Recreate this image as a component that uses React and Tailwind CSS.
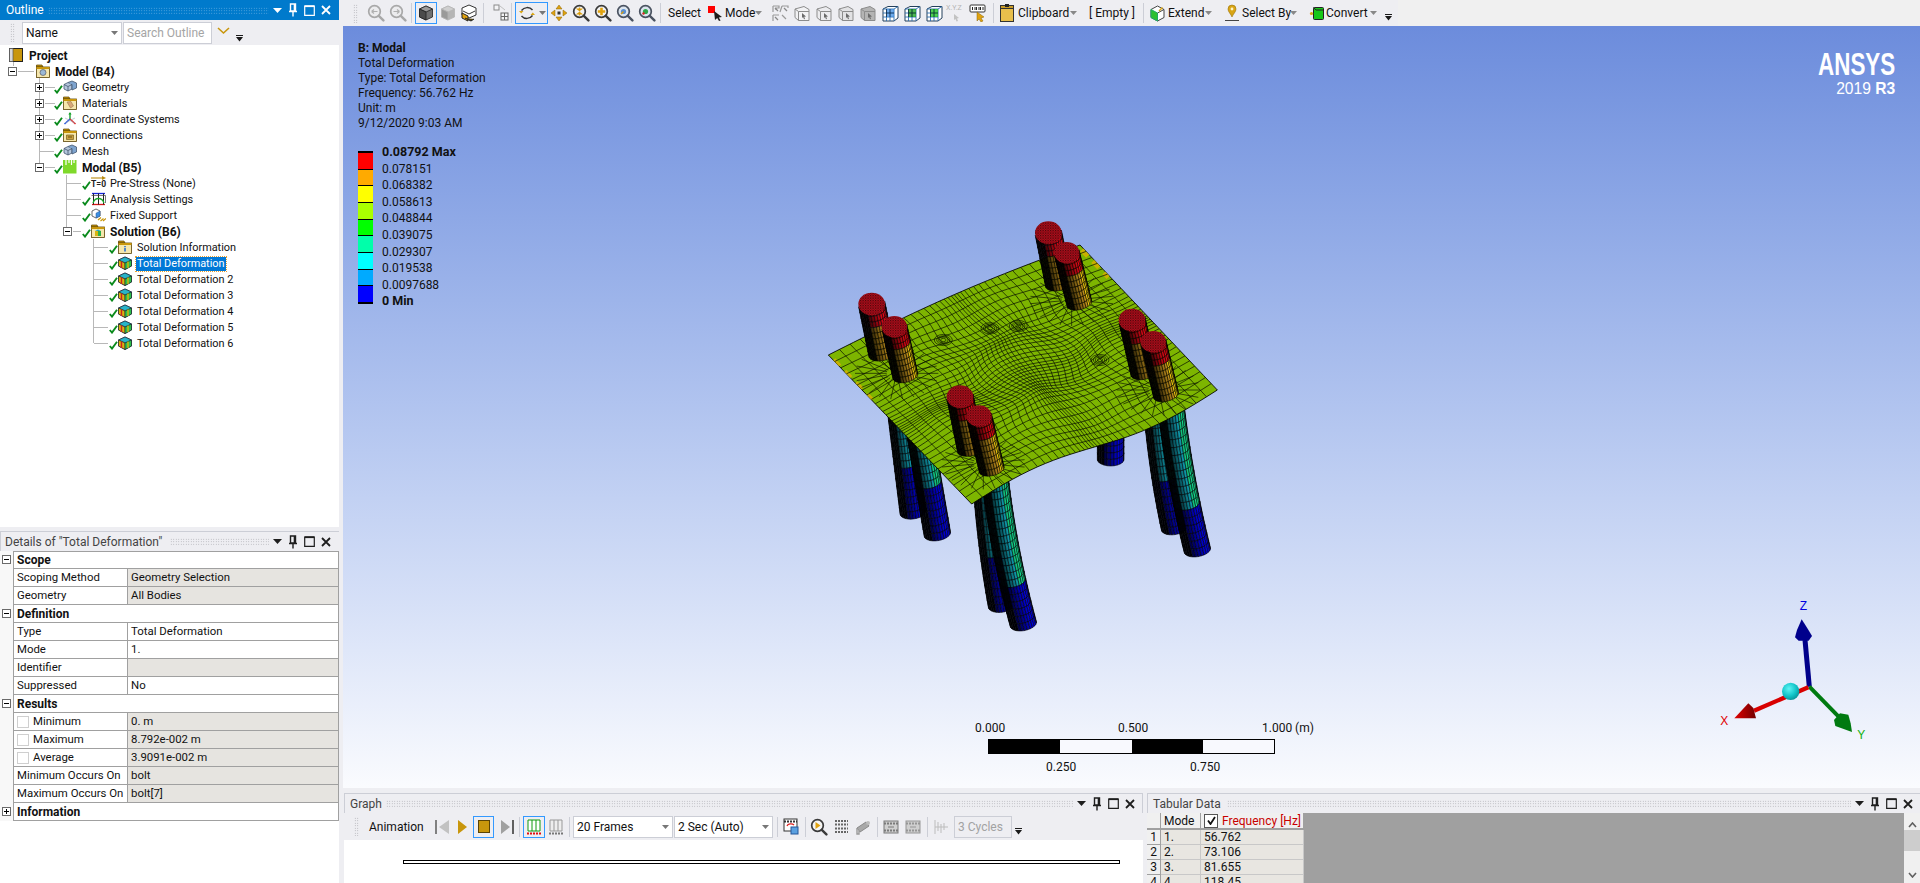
import React from "react";

/* ---------- small generic drawing helpers ---------- */
const S = ({ w = 16, h = 16, vb, children, className = "" }) => (
  <svg width={w} height={h} viewBox={vb || `0 0 ${w} ${h}`} className={"block shrink-0 " + className}>{children}</svg>
);

const Caret = ({ c = "#808080", w = 7 }) => (
  <S w={w} h={4} vb="0 0 7 4"><path d="M0 0H7L3.5 4Z" fill={c} /></S>
);

const Overflow = () => (
  <S w={7} h={8} vb="0 0 7 8"><path d="M0 1H7V2H0Z M0 3H7L3.5 7.5Z" fill="#1a1a1a" /></S>
);

const Sep = ({ className = "" }) => <div className={"w-px h-[20px] bg-[#ccced6] shrink-0 " + className} />;

const Grip = ({ className = "" }) => (
  <div className={"w-[5px] h-[19px] shrink-0 bg-[radial-gradient(#a3a3a8_0.7px,transparent_0.8px)] bg-[length:2.5px_2.5px] " + className} />
);

const PanelButtons = ({ c = "#1e1e1e", className = "" }) => (
  <div className={"flex items-center shrink-0 " + className}>
    <S w={9} h={5} vb="0 0 9 5"><path d="M0 0H9L4.5 5Z" fill={c} /></S>
    <S w={10} h={14} vb="0 0 10 14" className="ml-[6px]">
      <path d="M2.5 1H7.5V8H2.5Z M1 8.5H9 M5 9V13.5 M6.4 1.5V8" fill="none" stroke={c} strokeWidth="1.4" />
    </S>
    <S w={11} h={11} vb="0 0 11 11" className="ml-[6px]">
      <path d="M.7 1.2H10.3V10.3H.7Z" fill="none" stroke={c} strokeWidth="1.2" />
      <path d="M.7 1.2H10.3" stroke={c} strokeWidth="1.8" />
    </S>
    <S w={10} h={10} vb="0 0 10 10" className="ml-[6px]">
      <path d="M1 1L9 9M9 1L1 9" stroke={c} strokeWidth="1.8" />
    </S>
  </div>
);

/* ---------- toolbar icons ---------- */
const Mag = ({ ring = "#3a3a3a", fill = "#e8e8ea", children }) => (
  <S w={18} h={18}>
    <circle cx="7.5" cy="7.5" r="5.8" fill={fill} stroke={ring} strokeWidth="1.7" />
    <path d="M11.8 11.8L16.4 16.4" stroke={ring} strokeWidth="2.4" strokeLinecap="round" />
    {children}
  </S>
);

const Cube = ({ a = "#5a5a5a", b = "#8b8b8b", c = "#b5b5b5", o = "#222", s = 16 }) => (
  <S w={s} h={s} vb="0 0 16 16">
    <path d="M8 1L14.5 4V12L8 15L1.5 12V4Z" fill={b} stroke={o} strokeWidth=".8" />
    <path d="M8 1L14.5 4L8 7L1.5 4Z" fill={c} stroke={o} strokeWidth=".8" />
    <path d="M8 7V15L1.5 12V4Z" fill={a} stroke={o} strokeWidth=".8" />
  </S>
);

const WireBox = ({ fill = "#f2f2f4" }) => (
  <S w={16} h={17}>
    <path d="M1 4L10 1.5L15 4.5V15.5H4.5L1 12.5Z" fill={fill} stroke="#8c8c8c" />
    <path d="M1 4L4.5 6.5V15.5 M4.5 6.5H15" fill="none" stroke="#8c8c8c" />
    <path d="M8 8L12 11.5L10.2 11.7L11 14L10 14.3L9.1 12L8 13Z" fill="#6a6a6a" />
  </S>
);

const GridBox = ({ accent = "#2f6fd6" }) => (
  <S w={17} h={17}>
    <path d="M1 4L6 1.5H16V13L12 16H1Z" fill="#fff" stroke="#24405c" />
    <path d="M1 4H12V16 M12 4L16 1.5 M4.5 4V16 M8 4V16 M1 8H12 M1 12H12" fill="none" stroke="#2c6fb0" strokeWidth=".9" />
    <path d="M4.5 4H12V12H4.5Z" fill={accent} opacity=".75" />
    <path d="M4.5 4V12 M8 4V12 M4.5 8H12" stroke="#123" strokeWidth=".7" />
  </S>
);

const Ib = ({ w = "w-[22px]", children }) => (
  <div className={`${w} h-[22px] flex items-center justify-center shrink-0`}>{children}</div>
);

const Boxed = ({ className = "", children }) => (
  <div className={"h-[22px] flex items-center justify-center shrink-0 border border-[#3399ff] " + className}>{children}</div>
);

const ModeCursor = () => (
  <S w={15} h={15}>
    <rect x="0" y="0" width="7" height="7" fill="#ff0000" />
    <path d="M6 5L14 11L10.8 11.4L12.6 14.5L11 15L9.2 12L7 14Z" fill="#1d1d1d" />
  </S>
);

const Rotate = () => (
  <S w={18} h={18}>
    <path d="M3.5 6.5A7 7 0 0 1 14.5 6" fill="none" stroke="#333" strokeWidth="1.4" />
    <path d="M14.5 11.5A7 7 0 0 1 3.5 12" fill="none" stroke="#333" strokeWidth="1.4" />
    <path d="M1 7H5.5L3.2 9.6Z" fill="#d9a514" />
    <path d="M17 11H12.5L14.8 8.4Z" fill="#d9a514" />
  </S>
);

const Pan = () => (
  <S w={18} h={18}>
    <path d="M9 1L12 5H6Z M9 17L6 13H12Z M1 9L5 6V12Z M17 9L13 12V6Z" fill="#e0a20f" stroke="#8a6406" strokeWidth=".5" />
    <rect x="7.5" y="7.5" width="3" height="3" fill="#333" />
  </S>
);

const Clip = () => (
  <S w={14} h={18}>
    <rect x=".5" y="1.5" width="13" height="16" fill="#e8bf4c" stroke="#333" />
    <rect x=".5" y="1.5" width="13" height="3" fill="#c99c26" stroke="#333" />
    <rect x="5" y="0" width="4" height="3" fill="#222" />
  </S>
);

const ExtendIcon = () => (
  <S w={15} h={17}>
    <path d="M7.5 1L14 4.5V12.5L7.5 16L1 12.5V4.5Z" fill="#fff" stroke="#444" />
    <path d="M7.5 8V16L1 12.5V4.5Z" fill="#2fc02f" stroke="#2a6" />
    <path d="M7.5 8L14 4.5" stroke="#444" />
    <path d="M9 6L12.5 2.5" stroke="#d9a514" strokeWidth="1.5" />
  </S>
);

const PinIcon = () => (
  <S w={16} h={18}>
    <path d="M8 1A4 4 0 0 1 12 5C12 8 9 10 8 13C7 10 4 8 4 5A4 4 0 0 1 8 1Z" fill="#d9a514" stroke="#9a7208" strokeWidth=".6" />
    <circle cx="8" cy="5" r="1.4" fill="#fff3c4" />
    <path d="M1 16.5H15" stroke="#444" />
  </S>
);

const ConvertIcon = () => (
  <S w={16} h={15}>
    <rect x="4.5" y="1.5" width="10" height="12" rx="1" fill="#18c818" stroke="#222" />
    <path d="M4.5 1.5L7 4H14.5" fill="none" stroke="#222" />
    <circle cx="2.5" cy="7.5" r="1.6" fill="#d9a514" />
  </S>
);

const Tx = ({ className = "", children }) => (
  <div className={"text-[12px] leading-none whitespace-nowrap shrink-0 text-[#111] " + className}>{children}</div>
);

const TopToolbar = () => (
  <div className="flex items-center h-[26px] bg-[#eeeef2]">
    <Grip className="ml-[10px]" />
    <Ib w="ml-[7px] w-[22px]"><Mag ring="#a8a8a8" fill="#ececee"><path d="M4.5 7.5H10.5M4.5 7.5L7 5.5M4.5 7.5L7 9.5" stroke="#b0b0b0" strokeWidth="1.2" fill="none" /></Mag></Ib>
    <Ib><Mag ring="#a8a8a8" fill="#ececee"><path d="M4.5 7.5H10.5M10.5 7.5L8 5.5M10.5 7.5L8 9.5" stroke="#b0b0b0" strokeWidth="1.2" fill="none" /></Mag></Ib>
    <Sep className="ml-[2px]" />
    <Boxed className="ml-[3px] w-[22px]"><Cube a="#4b4b4b" b="#6f6f6f" c="#9a9a9a" /></Boxed>
    <Ib><Cube a="#9a9a9a" b="#b5b5b5" c="#cfcfcf" o="#b5b5b5" /></Ib>
    <Ib>
      <S w={18} h={18}>
        <path d="M8 1L15 4V11L8 14L1 11V4Z" fill="#fff" stroke="#333" />
        <path d="M1 9L7 12V17L1 14Z" fill="#e0a20f" stroke="#222" />
        <path d="M2 7L8 10L14 7" fill="none" stroke="#333" />
        <path d="M4 14L10 17L13 15" stroke="#222" fill="#5a4a10" />
      </S>
    </Ib>
    <Sep className="ml-[2px]" />
    <Ib w="ml-[7px] w-[20px]">
      <S w={16} h={18}>
        <rect x="1" y="1" width="5" height="5" fill="#f4f4f6" stroke="#8a8a8a" />
        <path d="M7 2L12 6" stroke="#c0c0c0" />
        <rect x="8" y="9" width="7" height="7" fill="#f4f4f6" stroke="#666" />
        <path d="M11.5 9V16M8 12.5H15" stroke="#666" />
      </S>
    </Ib>
    <Sep />
    <Boxed className="ml-[3px] w-[33px] gap-[3px]"><Rotate /><Caret c="#777" /></Boxed>
    <Ib><Pan /></Ib>
    <Ib><Mag fill="#f2f2f2"><path d="M7.5 3.5V6.6L5.5 5H9.5L7.5 6.6 M7.5 11.5V8.4L5.5 10H9.5L7.5 8.4" stroke="#d99c0c" strokeWidth="1.2" fill="#d99c0c" /></Mag></Ib>
    <Ib><Mag fill="#f2f2f2"><path d="M3.8 7.5H11.2M7.5 3.8V11.2" stroke="#e0a20f" strokeWidth="2.6" /></Mag></Ib>
    <Ib><Mag ring="#4a5260" fill="#dbe4ee"><circle cx="7.5" cy="7.5" r="2.6" fill="#5a8fd0" /><path d="M5 10L7.5 7.5" stroke="#d99c0c" strokeWidth="1.2" /></Mag></Ib>
    <Ib><Mag ring="#4a5260" fill="#dbe4ee"><circle cx="7.5" cy="7.5" r="2.6" fill="#2fa84a" /><circle cx="5.5" cy="9.5" r="1.2" fill="#d22" /></Mag></Ib>
    <Sep className="ml-[2px]" />
    <Tx className="ml-[7px] w-[32px]">Select</Tx>
    <div className="ml-[8px] shrink-0"><ModeCursor /></div>
    <Tx className="ml-[2px] w-[29px]">Mode</Tx>
    <div className="ml-[1px] shrink-0"><Caret c="#888" /></div>
    <Ib w="ml-[7px] w-[22px]">
      <S w={18} h={18}>
        <path d="M2 2H8V4H5V6 M2 2V8 M11 2H17V4 M11 2L9 8 M2 11H8 M2 11V17 M11 11L15 15" fill="none" stroke="#9a9a9a" strokeWidth="1.2" />
        <path d="M4 4L7 7M13 4L16 7M4 13L7 16" stroke="#888" strokeWidth="1.3" />
      </S>
    </Ib>
    <Ib><WireBox /></Ib>
    <Ib><WireBox fill="#ececef" /></Ib>
    <Ib><WireBox fill="#e2e2e4" /></Ib>
    <Ib><WireBox fill="#b4b4b4" /></Ib>
    <Ib><GridBox accent="#3f8fe6" /></Ib>
    <Ib><GridBox accent="#16a016" /></Ib>
    <Ib><GridBox accent="#16c016" /></Ib>
    <Ib>
      <div className="relative w-[20px] h-[18px]">
        <div className="absolute top-0 left-0 text-[7px] leading-[8px] text-[#b5b5b5] whitespace-nowrap">X.Y.Z</div>
        <S w={20} h={18} className="absolute top-0 left-0"><path d="M8 10L13 14L11 14.4L12 17L10.5 17.4L9.5 15L8 16Z" fill="#c2c2c2" /></S>
      </div>
    </Ib>
    <Ib>
      <S w={18} h={18}>
        <rect x="1" y="1" width="15" height="7" rx="1" fill="#fff" stroke="#333" />
        <path d="M3.5 3V6 M6 3V6M7.5 3V6M10 3V6M11.5 3V6M14 3V6" stroke="#222" />
        <path d="M8 8L8 17L10 15L12 18L14 17L12 14L15 13Z" fill="#e0a20f" stroke="#8a6406" strokeWidth=".5" />
      </S>
    </Ib>
    <Sep className="ml-[4px]" />
    <div className="ml-[6px] shrink-0"><Clip /></div>
    <Tx className="ml-[4px] w-[51px]">Clipboard</Tx>
    <div className="ml-[1px] shrink-0"><Caret c="#888" /></div>
    <Tx className="ml-[12px] w-[48px]">[ Empty ]</Tx>
    <Sep className="ml-[6px]" />
    <div className="ml-[6px] shrink-0"><ExtendIcon /></div>
    <Tx className="ml-[3px] w-[36px]">Extend</Tx>
    <div className="ml-[1px] shrink-0"><Caret c="#888" /></div>
    <div className="ml-[12px] shrink-0"><PinIcon /></div>
    <Tx className="ml-[2px] w-[47px]">Select By</Tx>
    <div className="ml-[1px] shrink-0"><Caret c="#888" /></div>
    <div className="ml-[12px] shrink-0"><ConvertIcon /></div>
    <Tx className="ml-[1px] w-[42px]">Convert</Tx>
    <div className="ml-[2px] shrink-0"><Caret c="#888" /></div>
    <div className="ml-[8px] mt-[7px] shrink-0"><Overflow /></div>
    <div className="ml-[6px] flex-1 h-[26px] bg-[#f0f0f0]" />
  </div>
);

/* ---------- tree icons ---------- */
const Check = () => (
  <S w={9} h={9} className="mt-[6px]"><path d="M.8 5L3 7.6L8 .8" fill="none" stroke="#0a8a1c" strokeWidth="1.9" /></S>
);

const Folder = ({ children }) => (
  <S w={14} h={14}>
    <path d="M.5 3V1H6L7 3Z" fill="#c8960c" stroke="#5a4305" strokeWidth=".7" />
    <rect x=".5" y="3" width="13" height="10.5" fill="#f6e7ad" stroke="#5a4305" strokeWidth=".8" />
    <path d="M.5 3H13.5V5H.5Z" fill="#c8960c" />
    {children}
  </S>
);

const GeoCube = () => (
  <S w={14} h={14}>
    <path d="M1 4.5L5 2.5L9 4.5V9L5 11L1 9Z" fill="#b4c6dc" stroke="#42566e" strokeWidth=".8" />
    <path d="M5 2.5L9 1L13.5 3V8L9 10V4.5" fill="#7ea4cf" stroke="#42566e" strokeWidth=".8" />
    <path d="M1 4.5L5 6.5L9 4.5M5 6.5V11" fill="none" stroke="#42566e" strokeWidth=".8" />
  </S>
);

const Triad = () => (
  <S w={14} h={14}>
    <path d="M7 7V1" stroke="#16a02a" strokeWidth="1.4" />
    <path d="M5.4 2.6L7 0L8.6 2.6Z" fill="#16a02a" />
    <path d="M7 7L1.5 12" stroke="#1f4fe0" strokeWidth="1.4" />
    <path d="M7 7L12.5 12" stroke="#e02020" strokeWidth="1.4" />
    <path d="M2 6L12 11M12 6L2 11" stroke="#9ab" strokeWidth=".6" />
  </S>
);

const ModalIcon = () => (
  <S w={14} h={14}>
    <rect width="13.5" height="13.5" fill="#7fd92a" />
    <path d="M3 0V5M6 0V3M8.5 0V5M11 0V3" stroke="#fff" strokeWidth="1.2" />
  </S>
);

const PreStress = () => (
  <div className="relative w-[16px] h-[14px] shrink-0 -mr-[2px]">
    <S w={15} h={5} className="absolute top-0 left-0"><path d="M0 2H12" stroke="#b88a10" strokeWidth="1.1" /><path d="M11 0L15 2L11 4Z" fill="#b88a10" /></S>
    <div className="absolute left-0 top-[4px] text-[8.5px] leading-[9px] font-bold text-[#222]">T=0</div>
  </div>
);

const Analysis = () => (
  <S w={15} h={14}>
    <path d="M1 1.5H14" stroke="#1526e0" strokeWidth="1.3" />
    <path d="M1 12.5H14" stroke="#d81818" strokeWidth="1.3" />
    <path d="M2.5 1.5V12.5M7.5 1.5V12.5M12.5 1.5V12.5" stroke="#222" />
    <path d="M.5 3.5H14.5V11" fill="none" stroke="#444" strokeWidth=".7" />
    <path d="M2 11C4 5 11 5 13 11" fill="none" stroke="#1aa82a" strokeWidth="1.3" />
  </S>
);

const Fixed = () => (
  <S w={15} h={14}>
    <path d="M1 3L5 1L9 3V8L5 10L1 8Z" fill="#fff" stroke="#444" strokeWidth=".8" />
    <path d="M5 5.2L9 3V8L5 10Z" fill="#3d8fe0" stroke="#25579a" strokeWidth=".5" />
    <path d="M7 12L10 9.5M9.5 13L12.5 10.5M12 13L15 10.5" stroke="#c8960c" strokeWidth="1.2" />
  </S>
);

const Result = () => (
  <S w={14} h={14}>
    <path d="M7 1L13.5 4V10L7 13.5L.5 10V4Z" fill="#1a7a80" stroke="#223" strokeWidth=".8" />
    <path d="M7 1L13.5 4L7 7L.5 4Z" fill="#28b4c8" stroke="#223" strokeWidth=".6" />
    <path d="M7 7V13.5L.5 10V4Z" fill="#d8b410" stroke="#223" strokeWidth=".6" />
    <path d="M3.5 5.5V12" stroke="#c22" strokeWidth="1.4" />
    <path d="M7 7V13.5L13.5 10V4Z" fill="#2cc04a" stroke="#223" strokeWidth=".6" />
    <path d="M10 5.5V12" stroke="#d8b410" strokeWidth="1.4" />
  </S>
);

const Pm = ({ open, size = "w-[9px] h-[9px]" }) => (
  <div className={`${size} relative border border-[#6a6a6a] bg-white shrink-0`}>
    <div className="absolute left-[1px] right-[1px] top-[3px] h-px bg-black" />
    {!open && <div className="absolute top-[1px] bottom-[1px] left-[3px] w-px bg-black" />}
  </div>
);

const levels = { 1: "pl-[8px]", 2: "pl-[35px]", 3: "pl-[63px]", 4: "pl-[90px]" };

const Row = ({ level, pm, check = true, icon, bold, selected, children }) => (
  <div className={`flex items-center h-[16px] ${levels[level]}`}>
    <div className="w-[9px] shrink-0">{pm && <Pm open={pm === "open"} />}</div>
    <div className="w-[9px] h-[16px] ml-[10px] shrink-0">{check && <Check />}</div>
    <div className="w-[14px] shrink-0 flex">{icon}</div>
    <div className={`leading-[14px] whitespace-nowrap mt-[1px] ${bold ? "font-bold text-[12px]" : "text-[10.9px]"} ${selected ? "ml-[4px] px-[1px] bg-[#0078d7] text-white outline-1 outline-dotted outline-[#e8a030]" : "ml-[5px] text-[#111]"}`}>{children}</div>
  </div>
);

const TreeLines = () => (
  <svg className="absolute left-0 top-0" width="339" height="340" viewBox="0 45 339 340">
    <path
      d="M13 62V66M18 71H34M39 78V167M45 87H54M45 103H54M45 119H54M45 135H54M40 151H54M45 167H54M66 175V231M67 183H81M67 199H81M67 215H81M73 231H81M93 239V343M94 247H108M94 263H108M94 279H108M94 295H108M94 311H108M94 327H108M94 343H108"
      fill="none" stroke="#707070" strokeDasharray="1 1" transform="translate(.5 .5)"
    />
  </svg>
);

const Outline = () => (
  <div className="h-[527px] flex flex-col shrink-0">
    <div className="h-[20px] bg-[#007acc] flex items-center shrink-0">
      <div className="ml-[6px] text-white text-[12px] leading-none">Outline</div>
      <div className="ml-[4px] flex-1 h-[7px] bg-[radial-gradient(#6db4e4_0.7px,transparent_0.8px)] bg-[length:2.5px_2.5px]" />
      <PanelButtons c="#ffffff" className="ml-[4px] mr-[8px]" />
    </div>
    <div className="h-[25px] bg-[#eeeef2] flex items-center shrink-0">
      <Grip className="ml-[10px]" />
      <div className="ml-[7px] w-[100px] h-[22px] bg-white border border-[#ccced6] flex items-center shrink-0">
        <span className="ml-[3px] text-[12px] text-[#111]">Name</span>
        <span className="ml-auto mr-[3px]"><Caret c="#777" /></span>
      </div>
      <div className="ml-[1px] w-[89px] h-[22px] bg-white border border-[#ccced6] flex items-center shrink-0">
        <span className="ml-[3px] text-[12px] text-[#a5a5a5] whitespace-nowrap">Search Outline</span>
      </div>
      <S w={13} h={8} className="ml-[5px] -mt-[4px]"><path d="M1 1L6.5 6L12 1" fill="none" stroke="#c8960c" strokeWidth="1.6" /></S>
      <div className="ml-[6px] mt-[10px]"><Overflow /></div>
    </div>
    <div className="relative flex-1 bg-white pt-[2px]">
      <TreeLines />
      <div className="relative">
        <div className="flex items-center h-[16px] pl-[9px]">
          <S w={14} h={14}>
            <rect x=".5" y=".5" width="13" height="13" fill="#c8960c" stroke="#222" />
            <rect x=".5" y=".5" width="3.5" height="13" fill="#d8d8d8" stroke="#555" strokeWidth=".7" />
          </S>
          <div className="ml-[6px] mt-[1px] text-[12px] leading-[14px] font-bold text-[#111]">Project</div>
        </div>
        <Row level={1} pm="open" check={false} bold icon={<Folder><circle cx="7" cy="8.5" r="3" fill="#9bb8d4" stroke="#445" strokeWidth=".6" /></Folder>}>Model (B4)</Row>
        <Row level={2} pm="closed" icon={<GeoCube />}>Geometry</Row>
        <Row level={2} pm="closed" icon={<Folder><path d="M4 6L8 5.5L10.5 10L7.5 12Z" fill="#d8a878" stroke="#8a6a40" strokeWidth=".5" /></Folder>}>Materials</Row>
        <Row level={2} pm="closed" icon={<Triad />}>Coordinate Systems</Row>
        <Row level={2} pm="closed" icon={<Folder><path d="M3.5 7H10.5V11.5H3.5Z" fill="#c8a040" stroke="#6a5010" strokeWidth=".6" /><path d="M5 9H9" stroke="#6a5010" /></Folder>}>Connections</Row>
        <Row level={2} icon={<GeoCube />}>Mesh</Row>
        <Row level={2} pm="open" bold icon={<ModalIcon />}>Modal (B5)</Row>
        <Row level={3} icon={<PreStress />}>Pre-Stress (None)</Row>
        <Row level={3} icon={<Analysis />}>Analysis Settings</Row>
        <Row level={3} icon={<Fixed />}>Fixed Support</Row>
        <Row level={3} pm="open" bold icon={<Folder><path d="M4 7H7V12H4Z" fill="#d8b410" /><path d="M7 7H10V12H7Z" fill="#2cb04a" /><path d="M4 7L7 5.5L10 7Z" fill="#28a4c8" /></Folder>}>Solution (B6)</Row>
        <Row level={4} icon={<Folder><path d="M6.2 6H7.8V7.2H6.2Z M6.2 8H7.8V11.5H6.2Z" fill="#2a6fd0" /></Folder>}>Solution Information</Row>
        <Row level={4} selected icon={<Result />}>Total Deformation</Row>
        <Row level={4} icon={<Result />}>Total Deformation 2</Row>
        <Row level={4} icon={<Result />}>Total Deformation 3</Row>
        <Row level={4} icon={<Result />}>Total Deformation 4</Row>
        <Row level={4} icon={<Result />}>Total Deformation 5</Row>
        <Row level={4} icon={<Result />}>Total Deformation 6</Row>
      </div>
    </div>
  </div>
);

/* ---------- details ---------- */
const Section = ({ children, open = true, first }) => (
  <div className="flex h-[18px]">
    <div className="w-[13px] shrink-0 bg-[#f8f8f8] pl-[2px] pt-[4px]"><Pm open={open} /></div>
    <div className={`flex-1 flex items-center border-l border-r border-b border-[#a0a0a0] bg-white pl-[3px] text-[12px] font-bold text-[#111] ${first ? "border-t" : ""}`}>{children}</div>
  </div>
);

const Prop = ({ k, v, white, box }) => (
  <div className="flex h-[18px]">
    <div className="w-[13px] shrink-0 bg-[#f8f8f8]" />
    <div className="flex flex-1 border-l border-r border-b border-[#a0a0a0] text-[11.4px] text-[#111]">
      <div className="w-[114px] shrink-0 flex items-center border-r border-[#a0a0a0] bg-white pl-[3px] whitespace-nowrap">
        {box && <div className="w-[12px] h-[12px] border border-[#cfcfcf] bg-white mr-[4px] shrink-0" />}
        {k}
      </div>
      <div className={`flex-1 flex items-center pl-[3px] ${white ? "bg-white" : "bg-[#e6e4e0]"}`}>{v}</div>
    </div>
  </div>
);

const Details = () => (
  <div className="flex-1 flex flex-col mt-[4px]">
    <div className="h-[20px] flex items-center border-t border-l border-[#ccced6] shrink-0">
      <div className="ml-[4px] text-[12px] leading-none text-[#444] whitespace-nowrap">Details of "Total Deformation"</div>
      <div className="ml-[8px] flex-1 h-[7px] bg-[radial-gradient(#a8a8ae_0.7px,transparent_0.8px)] bg-[length:2.5px_2.5px]" />
      <PanelButtons className="ml-[4px] mr-[8px]" />
    </div>
    <div className="flex-1 bg-white">
      <Section first>Scope</Section>
      <Prop k="Scoping Method" v="Geometry Selection" />
      <Prop k="Geometry" v="All Bodies" />
      <Section>Definition</Section>
      <Prop k="Type" v="Total Deformation" white />
      <Prop k="Mode" v="1." white />
      <Prop k="Identifier" v="" />
      <Prop k="Suppressed" v="No" white />
      <Section>Results</Section>
      <Prop k="Minimum" v="0. m" box />
      <Prop k="Maximum" v="8.792e-002 m" box />
      <Prop k="Average" v="3.9091e-002 m" box />
      <Prop k="Minimum Occurs On" v="bolt" />
      <Prop k="Maximum Occurs On" v="bolt[7]" />
      <Section open={false}>Information</Section>
    </div>
  </div>
);

/* ---------- FE model drawing ---------- */
const hex = (c) => [1, 3, 5].map((i) => parseInt(c.slice(i, i + 2), 16));
const shadeCol = (c, f) => {
  const [r, g, b] = hex(c);
  const t = (x) => Math.max(0, Math.min(255, Math.round(x * f)));
  return `rgb(${t(r)},${t(g)},${t(b)})`;
};

function cylinder(key, a, b, r, bend, colorFn, n = 14, m = 12) {
  const dx = b[0] - a[0], dy = b[1] - a[1];
  const len = Math.hypot(dx, dy);
  const ax = [dx / len, dy / len];
  const pp = [ax[1], -ax[0]];
  const pt = (t, th) => {
    const bow = bend * 4 * t * (1 - t);
    const s = Math.sin(th), c = Math.cos(th);
    return [
      a[0] + dx * t + pp[0] * (r * s + bow) + ax[0] * r * 0.5 * c,
      a[1] + dy * t + pp[1] * (r * s + bow) + ax[1] * r * 0.5 * c,
    ];
  };
  const out = [];
  for (let i = 0; i < m; i++) {
    const t0 = i / m, t1 = (i + 1) / m;
    for (let j = 0; j < n; j++) {
      const th0 = -Math.PI / 2 + (Math.PI * j) / n;
      const th1 = -Math.PI / 2 + (Math.PI * (j + 1)) / n;
      const s = Math.sin((th0 + th1) / 2);
      const lit = s < -0.5 ? 0.03 : s > 0.985 ? 0.05 : s > 0.9 ? 1.05 : 0.22 + 0.62 * (s + 0.5);
      const fill = shadeCol(colorFn((t0 + t1) / 2, s), lit);
      const pts = [pt(t0, th0), pt(t0, th1), pt(t1, th1), pt(t1, th0)]
        .map((p) => p[0].toFixed(1) + "," + p[1].toFixed(1)).join(" ");
      out.push(<polygon key={`${key}-${i}-${j}`} points={pts} fill={fill} stroke="#000" strokeWidth="1.7" />);
    }
  }
  return out;
}

const legCol = (cut) => (t, s) => {
  if (t > cut) return "#0000e8";
  return s > 0.35 ? "#14e090" : "#14c8e0";
};
const boltCol = (t, s) => {
  if (t < 0.38) return "#f00818";
  if (s > 0.6) return "#f8d010";
  return "#d8a020";
};

const L = [85, 465], T = [840, 135], Rr = [1252, 570], B = [515, 912];
const mix = (p, q, t) => [p[0] + (q[0] - p[0]) * t, p[1] + (q[1] - p[1]) * t];
const e0 = (u) => { const q = mix(L, T, u); return [q[0], q[1] - 16 * Math.sin(Math.PI * u)]; };
const e1 = (u) => { const q = mix(B, Rr, u); return [q[0], q[1] - 20 * Math.sin(2 * Math.PI * u)]; };
const plate = (u, v) => {
  const c0 = e0(u), c1 = e1(u);
  const d0 = mix(L, B, v), d1 = mix(T, Rr, v);
  const bl = mix(mix(L, T, u), mix(B, Rr, u), v);
  const env = Math.sin(Math.PI * u) * Math.sin(Math.PI * v);
  const dx = Math.sin(u * 13 + v * 5) * Math.sin(v * 15 - u * 4) * 26 * env;
  const dy = Math.cos(u * 11 - v * 7) * Math.sin(v * 12 + u * 6) * 22 * env;
  return [
    (1 - v) * c0[0] + v * c1[0] + (1 - u) * d0[0] + u * d1[0] - bl[0] + dx,
    (1 - v) * c0[1] + v * c1[1] + (1 - u) * d0[1] + u * d1[1] - bl[1] + dy,
  ];
};
const warp = (t) => {
  const s = 2 * t - 1;
  const a = Math.abs(s);
  return 0.5 + 0.5 * Math.sign(s) * (0.62 * Math.pow(a, 2.0) + 0.38 * a);
};
const N = 36;
const meshPaths = (() => {
  const lines = [];
  for (let i = 1; i < N; i++) {
    const g = warp(i / N);
    let d1 = "", d2 = "";
    for (let k = 0; k <= 30; k++) {
      const q = k / 30;
      const p1 = plate(g, q), p2 = plate(q, g);
      d1 += (k ? "L" : "M") + p1[0].toFixed(1) + " " + p1[1].toFixed(1);
      d2 += (k ? "L" : "M") + p2[0].toFixed(1) + " " + p2[1].toFixed(1);
    }
    lines.push(d1, d2);
  }
  return lines;
})();
const outlinePath = (() => {
  let d = "";
  const add = (f) => { for (let k = 0; k <= 30; k++) { const p = f(k / 30); d += (d ? "L" : "M") + p[0].toFixed(1) + " " + p[1].toFixed(1); } };
  add((q) => plate(q, 0));
  add((q) => plate(1, q));
  add((q) => plate(1 - q, 1));
  add((q) => plate(0, 1 - q));
  return d + "Z";
})();

const bolts = [
  [[215, 312], [246, 462], 40],
  [[283, 380], [316, 528], 38],
  [[745, 98], [776, 252], 40],
  [[800, 158], [838, 310], 38],
  [[996, 360], [1032, 518], 40],
  [[1060, 425], [1098, 585], 38],
  [[480, 590], [512, 748], 40],
  [[537, 648], [575, 808], 38],
];

const spiders = [[290, 520], [815, 300], [1075, 570], [550, 790]];
const knots = [[570, 385], [655, 378], [430, 420], [900, 480]];

const spiderPaths = (() => {
  const out = [];
  spiders.forEach(([x, y], si) => {
    for (let i = 0; i < 22; i++) {
      const a = (i / 22) * Math.PI * 2 + si;
      out.push(`M${x + Math.cos(a) * 30} ${y + Math.sin(a) * 18}L${x + Math.cos(a) * 125} ${y + Math.sin(a) * 78}`);
    }
  });
  knots.forEach(([x, y]) => {
    [8, 14, 20, 27].forEach((r) => {
      out.push(`M${x - r} ${y}A${r} ${r * 0.62} 0 1 0 ${x + r} ${y}A${r} ${r * 0.62} 0 1 0 ${x - r} ${y}`);
    });
  });
  return out.join("");
})();

const Model = () => (
  <svg width="450" height="450" viewBox="0 0 1350 1350" className="absolute left-[457px] top-[174px]">
    <defs>
      <pattern id="capdots" width="5" height="5" patternUnits="userSpaceOnUse">
        <rect width="5" height="5" fill="#c01020" />
        <circle cx="1.2" cy="1.2" r="1.3" fill="#200" />
        <circle cx="3.8" cy="3.8" r="1.1" fill="#300" />
      </pattern>
      <clipPath id="plateclip"><path d={outlinePath} /></clipPath>
    </defs>
    {cylinder("e", [932, 680], [932, 778], 40, 0, () => "#0000e8", 12, 5)}
    {cylinder("a", [295, 590], [338, 938], 38, 0, legCol(0.57), 14, 16)}
    {cylinder("b", [358, 690], [412, 1002], 40, 0, legCol(0.51), 14, 14)}
    {cylinder("f", [1068, 620], [1122, 985], 38, -6, legCol(0.575), 14, 16)}
    {cylinder("g", [1108, 580], [1192, 1050], 40, -8, legCol(0.68), 14, 20)}
    {cylinder("c", [555, 820], [603, 1218], 38, -6, legCol(0.615), 14, 17)}
    {cylinder("d", [580, 790], [670, 1272], 40, -10, legCol(0.705), 14, 22)}
    <path d={outlinePath} fill="#7db500" stroke="#000" strokeWidth="2.6" strokeLinejoin="round" />
    <g clipPath="url(#plateclip)">
      <path d="M100 480L215 600" stroke="#c8b000" strokeWidth="16" strokeDasharray="26 22" fill="none" />
      <path d="M845 150L925 232" stroke="#c8b000" strokeWidth="14" strokeDasharray="26 22" fill="none" />
      {meshPaths.map((d, i) => <path key={i} d={d} fill="none" stroke="#0b1400" strokeWidth="2.2" />)}
      <path d={spiderPaths} fill="none" stroke="#0b1400" strokeWidth="2" />
    </g>
    {bolts.map(([a, b, r], i) => (
      <g key={i}>
        {cylinder("bolt" + i, a, b, r, 0, boltCol, 14, 9)}
        <ellipse cx={a[0]} cy={a[1]} rx={r} ry={r * 0.85} fill="url(#capdots)" />
      </g>
    ))}
  </svg>
);

/* ---------- viewport overlays ---------- */
const legendRows = ["0.078151", "0.068382", "0.058613", "0.048844", "0.039075", "0.029307", "0.019538", "0.0097688"];

const Legend = () => (
  <div className="absolute left-[15px] top-[15px] text-[#111] text-[12px] leading-[15px]">
    <div className="font-bold">B: Modal</div>
    <div>Total Deformation</div>
    <div>Type: Total Deformation</div>
    <div>Frequency: 56.762 Hz</div>
    <div>Unit: m</div>
    <div>9/12/2020 9:03 AM</div>
    <div className="flex mt-[20px]">
      <div className="w-[15px] h-[153px] bg-black pt-[2px] flex flex-col gap-[1px] pb-[2px]">
        <div className="h-[15.9px] bg-[#ff0000]" />
        <div className="h-[15.9px] bg-[#ffaa00]" />
        <div className="h-[15.9px] bg-[#ffff00]" />
        <div className="h-[15.9px] bg-[#aaff00]" />
        <div className="h-[15.9px] bg-[#00ff00]" />
        <div className="h-[15.9px] bg-[#00ffaa]" />
        <div className="h-[15.9px] bg-[#00ffff]" />
        <div className="h-[15.9px] bg-[#00aaff]" />
        <div className="h-[15.9px] bg-[#0000ff]" />
      </div>
      <div className="ml-[9px] -mt-[7px]">
        <div className="h-[16.6px] leading-[16.6px] font-bold text-[12.5px]">0.08792 Max</div>
        {legendRows.map((r) => <div key={r} className="h-[16.6px] leading-[16.6px]">{r}</div>)}
        <div className="h-[16.6px] leading-[16.6px] font-bold text-[12.5px]">0 Min</div>
      </div>
    </div>
  </div>
);

const Logo = () => (
  <div className="absolute right-[25px] top-[22px] flex flex-col items-end text-white font-['Liberation_Sans',sans-serif]">
    <div className="text-[32px] leading-[32px] font-bold origin-right scale-x-[0.7]">ANSYS</div>
    <div className="text-[17px] leading-[18px] origin-right scale-x-[0.92]">2019 <span className="font-bold">R3</span></div>
  </div>
);

const ScaleBar = () => (
  <div className="absolute left-[619px] top-[695px] w-[370px] text-[12px] leading-[14px] text-[#111] whitespace-nowrap">
    <div className="flex h-[15px] pl-[13px]">
      <span className="w-[143px]">0.000</span>
      <span className="w-[144px]">0.500</span>
      <span>1.000 (m)</span>
    </div>
    <div className="ml-[26px] mt-[3px] w-[287px] h-[15px] flex border border-black bg-[#f8f9fe]">
      <div className="w-1/4 bg-black" />
      <div className="w-1/4" />
      <div className="w-1/4 bg-black" />
      <div className="w-1/4" />
    </div>
    <div className="flex h-[15px] mt-[6px] pl-[84px]">
      <span className="w-[144px]">0.250</span>
      <span>0.750</span>
    </div>
  </div>
);

const Axes = () => (
  <svg width="240" height="170" viewBox="0 0 720 510" className="absolute left-[1337px] top-[554px]">
    <defs>
      <radialGradient id="ball" cx="0.4" cy="0.35" r="0.7">
        <stop offset="0" stopColor="#5ff4f4" />
        <stop offset="0.6" stopColor="#12c4c8" />
        <stop offset="1" stopColor="#0a8f96" />
      </radialGradient>
      <linearGradient id="redh" x1="0" y1="0" x2="1" y2="0">
        <stop offset="0" stopColor="#e00000" />
        <stop offset="1" stopColor="#700000" />
      </linearGradient>
    </defs>
    <path d="M388 320L375 180" stroke="#00008a" strokeWidth="15" />
    <path d="M365 118L384 148L396 168L386 182L356 182L345 172L351 150Z" fill="#00008c" />
    <path d="M388 320L478 412" stroke="#007a10" strokeWidth="12" />
    <path d="M516 456L466 438L462 420L480 400L505 404L512 430Z" fill="#007a10" />
    <path d="M385 322L222 392" stroke="#d80000" strokeWidth="13" />
    <path d="M163 415L205 370L220 384L228 415Z" fill="url(#redh)" />
    <circle cx="332" cy="334" r="26" fill="url(#ball)" />
    <text x="370" y="89" textAnchor="middle" fontSize="36" fill="#0000e0" fontFamily="Liberation Sans, sans-serif">Z</text>
    <text x="133" y="434" textAnchor="middle" fontSize="36" fill="#e00000" fontFamily="Liberation Sans, sans-serif">X</text>
    <text x="544" y="476" textAnchor="middle" fontSize="36" fill="#10b010" fontFamily="Liberation Sans, sans-serif">Y</text>
  </svg>
);

/* ---------- bottom panels ---------- */
const FilmIcon = ({ c = "#7a7a7a" }) => (
  <S w={16} h={16}>
    <rect x="1" y="2" width="14" height="12" fill="#cfcfcf" stroke={c} />
    <path d="M1 4.5H15M1 11.5H15" stroke={c} strokeWidth="2" strokeDasharray="2 1" />
    <path d="M5 8H11" stroke={c} />
  </S>
);

const Combo = ({ className = "", children }) => (
  <div className={`h-[22px] bg-white border border-[#ccced6] flex items-center shrink-0 ${className}`}>
    <span className="ml-[3px] text-[12px] text-[#111] whitespace-nowrap">{children}</span>
    <span className="ml-auto mr-[3px]"><Caret c="#777" /></span>
  </div>
);

const Graph = () => (
  <div className="w-[799px] ml-[1px] flex flex-col shrink-0">
    <div className="h-[20px] flex items-center border-t border-l border-r border-[#ccced6] shrink-0">
      <div className="ml-[5px] text-[12px] leading-none text-[#444]">Graph</div>
      <div className="ml-[4px] flex-1 h-[7px] bg-[radial-gradient(#a8a8ae_0.7px,transparent_0.8px)] bg-[length:2.5px_2.5px]" />
      <PanelButtons className="ml-[4px] mr-[7px]" />
    </div>
    <div className="h-[27px] bg-[#eeeef2] flex items-center shrink-0">
      <Grip className="ml-[10px]" />
      <Tx className="ml-[10px] w-[57px]">Animation</Tx>
      <S w={16} h={16} className="ml-[8px]"><path d="M1 1H3V15H1Z" fill="#808080" /><path d="M15 1V15L5 8Z" fill="#c2c2c2" /></S>
      <S w={10} h={16} className="ml-[7px]"><path d="M1 1L10 8L1 15Z" fill="#c8960c" /></S>
      <Boxed className="ml-[6px] w-[21px]"><div className="w-[12px] h-[13px] bg-[#c8960c] border border-[#5a4305]" /></Boxed>
      <S w={15} h={16} className="ml-[6px]"><path d="M1 1L10 8L1 15Z" fill="#a0a0a0" /><path d="M12 1H14V15H12Z" fill="#606060" /></S>
      <Sep className="ml-[4px]" />
      <Boxed className="ml-[3px] w-[22px]">
        <S w={16} h={16}><path d="M2 1H14V12H2Z M6 1V12M10 1V12" fill="#fff" stroke="#109a10" /><path d="M1 14.5H15" stroke="#e01010" strokeWidth="1.8" strokeDasharray="2 1" /></S>
      </Boxed>
      <Ib w="w-[22px]">
        <S w={16} h={16}><path d="M2 1H14V12H2Z M6 1V12M10 1V12" fill="#eee" stroke="#999" /><path d="M1 14.5H15" stroke="#777" strokeWidth="1.8" strokeDasharray="2 1" /></S>
      </Ib>
      <Sep className="ml-[2px]" />
      <Combo className="ml-[3px] w-[100px]">20 Frames</Combo>
      <Combo className="ml-[1px] w-[99px]">2 Sec (Auto)</Combo>
      <Sep className="ml-[4px]" />
      <Ib w="ml-[2px] w-[22px]">
        <S w={16} h={17}>
          <rect x="1" y="1" width="13" height="12" fill="#fff" stroke="#333" />
          <path d="M1 3.5H14" stroke="#333" strokeWidth="2" strokeDasharray="2 1" />
          <path d="M4 8A4 3 0 0 1 11 7" fill="none" stroke="#d22" strokeWidth="1.3" />
          <rect x="8" y="9" width="7" height="7" fill="#5aa0e0" stroke="#25579a" />
        </S>
      </Ib>
      <Sep className="ml-[3px]" />
      <Ib w="ml-[2px] w-[22px]"><Mag fill="#f4f4f4"><path d="M5.5 4L10.5 7.5L5.5 11Z" fill="#e0a20f" /></Mag></Ib>
      <Ib w="w-[22px]">
        <S w={15} h={15}><path d="M1 2H14M1 5.5H14M1 9.5H14M1 13H14" stroke="#666" strokeWidth="2" strokeDasharray="2 1" /></S>
      </Ib>
      <Ib w="w-[22px]">
        <S w={16} h={16}><path d="M2 9L11 3L14 7L5 13Z" fill="#a8a8a8" stroke="#8a8a8a" /><path d="M2 9V15H4V12" fill="none" stroke="#9a9a9a" strokeWidth="1.4" /><circle cx="13" cy="4" r="2" fill="#bcbcbc" /></S>
      </Ib>
      <Sep className="ml-[3px]" />
      <Ib w="ml-[2px] w-[22px]"><FilmIcon /></Ib>
      <Ib w="w-[22px]"><FilmIcon c="#959595" /></Ib>
      <Sep className="ml-[3px]" />
      <Ib w="ml-[2px] w-[22px]">
        <S w={16} h={16}><path d="M2 1V15M2 8H15M5 8V3M8 8V5M11 8V4M5 8V12M8 8V14M11 8V11" stroke="#bcbcbc" fill="none" /></S>
      </Ib>
      <div className="ml-[2px] w-[58px] h-[22px] bg-[#eeeef2] border border-[#ccced6] flex items-center shrink-0">
        <span className="ml-[3px] text-[12px] text-[#a2a2a2] whitespace-nowrap">3 Cycles</span>
      </div>
      <div className="ml-[3px] mt-[8px]"><Overflow /></div>
    </div>
    <div className="flex-1 bg-white pt-[20px]">
      <div className="ml-[59px] w-[717px] h-[4px] border border-black bg-white" />
    </div>
  </div>
);

const TabRow = ({ n, a, b }) => (
  <div className="flex h-[15px] w-[157px] text-[12px] leading-none text-[#111]">
    <div className="w-[14px] shrink-0 bg-[#f0f0f0] border-r border-b border-[#a0a0a0] flex items-center justify-center">{n}</div>
    <div className="w-[40px] shrink-0 bg-[#e8e6e1] border-r border-b border-[#c8c8c8] flex items-center pl-[3px]">{a}</div>
    <div className="flex-1 bg-[#e8e6e1] border-r border-b border-[#c8c8c8] flex items-center pl-[3px]">{b}</div>
  </div>
);

const Tabular = () => (
  <div className="flex-1 ml-[4px] flex flex-col">
    <div className="h-[20px] flex items-center border-t border-l border-[#ccced6] shrink-0">
      <div className="ml-[5px] text-[12px] leading-none text-[#444] whitespace-nowrap">Tabular Data</div>
      <div className="ml-[6px] flex-1 h-[7px] bg-[radial-gradient(#a8a8ae_0.7px,transparent_0.8px)] bg-[length:2.5px_2.5px]" />
      <PanelButtons className="ml-[4px] mr-[7px]" />
    </div>
    <div className="flex-1 flex min-h-0">
      <div className="flex-1 bg-[#a0a0a0] overflow-hidden">
        <div className="flex h-[17px] w-[157px] text-[12px] leading-none text-[#111]">
          <div className="w-[14px] shrink-0 bg-[#f0f0f0] border-r border-b-2 border-[#a0a0a0]" />
          <div className="w-[40px] shrink-0 bg-[#f0f0f0] border-r border-b-2 border-[#a0a0a0] flex items-center pl-[3px]">Mode</div>
          <div className="flex-1 bg-[#f0f0f0] border-r border-b-2 border-[#a0a0a0] flex items-center pl-[3px]">
            <div className="w-[14px] h-[14px] border border-[#555] bg-white flex items-center justify-center shrink-0">
              <S w={9} h={9}><path d="M1 4.5L3.5 8L8 1" fill="none" stroke="#111" strokeWidth="1.8" /></S>
            </div>
            <span className="ml-[4px] text-[#c80000] whitespace-nowrap">Frequency [Hz]</span>
          </div>
        </div>
        <TabRow n="1" a="1." b="56.762" />
        <TabRow n="2" a="2." b="73.106" />
        <TabRow n="3" a="3." b="81.655" />
        <TabRow n="4" a="4." b="118.45" />
      </div>
      <div className="w-[16px] shrink-0 bg-[#f0f0f0] flex flex-col items-center">
        <S w={9} h={6} className="mt-[9px]"><path d="M1 5L4.5 1L8 5" fill="none" stroke="#606060" strokeWidth="1.6" /></S>
        <div className="w-[16px] h-[21px] mt-[2px] bg-[#cdcdcd]" />
        <S w={9} h={6} className="mt-[21px]"><path d="M1 1L4.5 5L8 1" fill="none" stroke="#606060" strokeWidth="1.6" /></S>
      </div>
    </div>
  </div>
);

export default function App() {
  return (
    <div className="flex w-[1920px] h-[883px] overflow-hidden bg-[#eeeef2] font-['Roboto',sans-serif]">
      <div className="w-[339px] shrink-0 flex flex-col">
        <Outline />
        <Details />
      </div>
      <div className="ml-[4px] flex-1 flex flex-col min-w-0">
        <TopToolbar />
        <div className="relative h-[762px] shrink-0 overflow-hidden bg-gradient-to-b from-[#6c8cdc] to-[#fafbfe]">
          <Legend />
          <Logo />
          <Model />
          <ScaleBar />
          <Axes />
        </div>
        <div className="h-[5px] shrink-0" />
        <div className="flex h-[90px] shrink-0">
          <Graph />
          <Tabular />
        </div>
      </div>
    </div>
  );
}
